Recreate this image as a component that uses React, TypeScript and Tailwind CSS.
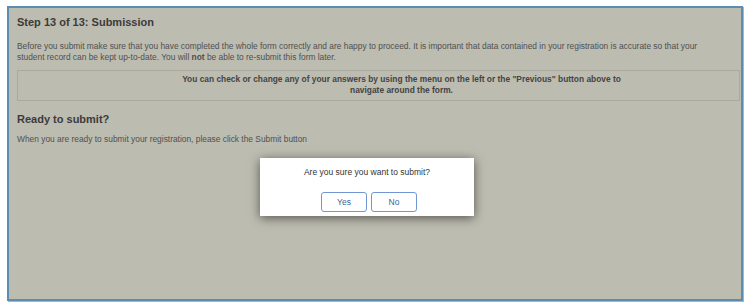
export default function App() {
  return (
    <div className="w-[750px] h-[307px] bg-white pt-[6px] pl-[7px] font-['Liberation_Sans',Arial,sans-serif]">
      <div className="relative w-[736px] h-[295px] border-2 border-[#5b8cb2] bg-[#bcbcb0] pl-[8px] pr-[1px] shadow-[1px_1px_0_#9fb7c9]">
        {/* Header */}
        <h2 className="mt-[7px] text-[11px] leading-[14px] font-bold text-[#3b3b3b]">
          Step 13 of 13: Submission
        </h2>

        <p className="mt-[12px] text-[8.4px] leading-[11px] text-[#505050]">
          Before you submit make sure that you have completed the whole form correctly and are happy to proceed. It is
          important that data contained in your registration is accurate so that your
          <br />
          student record can be kept up-to-date. You will <span className="font-bold">not</span> be able to re-submit
          this form later.
        </p>

        {/* Note */}
        <div className="mt-[7px] h-[31px] border border-[#a9a99f] pl-[46px] pt-[3px] text-center text-[8.4px] leading-[11px] font-bold text-[#444]">
          You can check or change any of your answers by using the menu on the left or the "Previous" button above to
          <br />
          navigate around the form.
        </div>

        <h2 className="mt-[11px] text-[11px] leading-[14px] font-bold text-[#3b3b3b]">Ready to submit?</h2>

        <p className="mt-[8px] text-[8.4px] leading-[11px] text-[#505050]">
          When you are ready to submit your registration, please click the Submit button
        </p>

        {/* Confirm dialog */}
        <div className="absolute left-[251px] top-[150px] w-[214px] h-[58px] bg-white shadow-[0_2px_10px_rgba(0,0,0,0.55)] pt-[9px]">
          <p className="text-center text-[8.5px] leading-[11px] text-[#333]">Are you sure you want to submit?</p>
          <div className="mt-[14px] flex justify-center gap-[4px] pl-[4px]">
            <button className="w-[46px] h-[20px] rounded-[3px] border border-[#7097d4] bg-white text-[8.5px] text-[#3f5f95]">
              Yes
            </button>
            <button className="w-[46px] h-[20px] rounded-[3px] border border-[#7097d4] bg-white text-[8.5px] text-[#3f5f95]">
              No
            </button>
          </div>
        </div>
      </div>
    </div>
  );
}
